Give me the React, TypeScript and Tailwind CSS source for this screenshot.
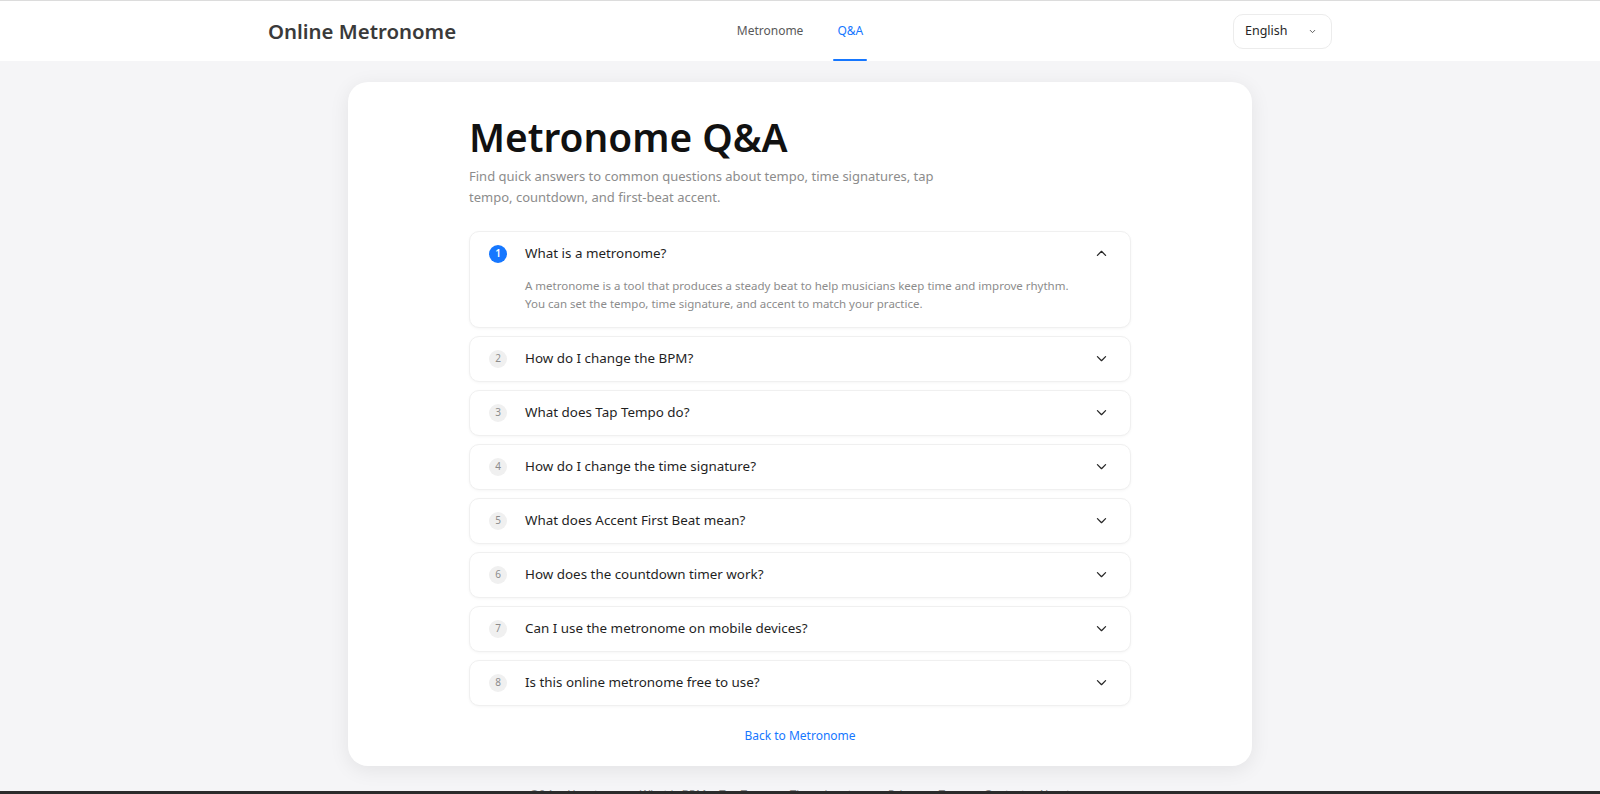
import { useState } from "react";

const faqs = [
  {
    q: "What is a metronome?",
    a: "A metronome is a tool that produces a steady beat to help musicians keep time and improve rhythm. You can set the tempo, time signature, and accent to match your practice.",
  },
  { q: "How do I change the BPM?", a: "" },
  { q: "What does Tap Tempo do?", a: "" },
  { q: "How do I change the time signature?", a: "" },
  { q: "What does Accent First Beat mean?", a: "" },
  { q: "How does the countdown timer work?", a: "" },
  { q: "Can I use the metronome on mobile devices?", a: "" },
  { q: "Is this online metronome free to use?", a: "" },
];

const footerLinks = ["Q&A", "How to use", "What is BPM", "Tap Tempo", "Time signatures", "Privacy", "Terms", "Contact", "About"];

function Chevron({ up }: { up?: boolean }) {
  return (
    <svg width="15" height="15" viewBox="0 0 24 24" fill="none" stroke="#262626" strokeWidth="2" strokeLinecap="round" strokeLinejoin="round">
      {up ? <path d="M5.5 15l6.5-6.5 6.5 6.5" /> : <path d="M5.5 9l6.5 6.5 6.5-6.5" />}
    </svg>
  );
}

export default function App() {
  const [open, setOpen] = useState(0);

  return (
    <div className="h-[794px] overflow-hidden bg-[#f5f5f7] border-t border-[#dcdcdc] font-['Noto_Sans',sans-serif]">
      {/* header */}
      <header className="bg-white h-[60px]">
        <div className="max-w-[1064px] mx-auto h-full grid grid-cols-3 items-center">
          <div className="text-[20.4px] font-semibold text-[#3a3a3a]">Online Metronome</div>
          <nav className="justify-self-center flex items-center gap-[30px] h-full text-[12px] pl-[4px]">
            <a className="text-[#595959] h-full flex items-center">Metronome</a>
            <a className="text-[#1677ff] h-full flex items-center relative px-[4px]">
              Q&amp;A
              <span className="absolute left-0 right-0 bottom-0 h-[2px] bg-[#1677ff] rounded" />
            </a>
          </nav>
          <div className="justify-self-end">
            <button className="w-[99px] h-[35px] rounded-[10px] border border-[#ececec] bg-white flex items-center justify-between pl-[11px] pr-[14px] text-[12.5px] text-[#262626]">
              English
              <svg width="9" height="9" viewBox="0 0 24 24" fill="none" stroke="#555" strokeWidth="2.5" strokeLinecap="round" strokeLinejoin="round">
                <path d="M6 9l6 6 6-6" />
              </svg>
            </button>
          </div>
        </div>
      </header>

      <main className="pt-[21px]">
        <div className="w-[904px] mx-auto bg-white rounded-[20px] shadow-[0_4px_20px_rgba(0,0,0,0.08)] pt-[32px] pb-[20px]">
          <div className="w-[662px] mx-auto">
            <h1 className="text-[38.8px] font-semibold text-[#111] leading-[1.2]">Metronome Q&amp;A</h1>
            <p className="mt-[5px] text-[13px] leading-[21px] text-[#8c8c8c] max-w-[480px]">
              Find quick answers to common questions about tempo, time signatures, tap tempo, countdown, and first-beat accent.
            </p>

            <div className="mt-[23px] flex flex-col gap-[8px]">
              {faqs.map((f, i) => {
                const isOpen = open === i;
                return (
                  <div key={i} className="border border-[#f0f0f0] rounded-[10px] bg-white shadow-[0_1px_3px_rgba(0,0,0,0.04)]">
                    <button
                      onClick={() => setOpen(isOpen ? -1 : i)}
                      className="w-full h-[44px] flex items-center pl-[19px] pr-[21px] text-left"
                    >
                      <span
                        className={
                          isOpen
                            ? "w-[18px] h-[18px] rounded-full bg-[#1677ff] text-white text-[10px] font-semibold flex items-center justify-center"
                            : "w-[18px] h-[18px] rounded-full bg-[#f0f0f0] text-[#8c8c8c] text-[10px] flex items-center justify-center"
                        }
                      >
                        {i + 1}
                      </span>
                      <span className="ml-[18px] flex-1 text-[13.4px] text-[#1f1f1f]">{f.q}</span>
                      <Chevron up={isOpen} />
                    </button>
                    {isOpen && (
                      <div className="pl-[55px] pr-[48px] pb-[14px] mt-[1px] text-[11.5px] leading-[18px] text-[#8c8c8c]">
                        {f.a}
                      </div>
                    )}
                  </div>
                );
              })}
            </div>

            <div className="mt-[16px] text-center">
              <a className="text-[12px] text-[#1677ff]">Back to Metronome</a>
            </div>
          </div>
        </div>

        <footer className="mt-[20px] flex justify-center gap-[13px] text-[11.3px] text-[#8c8c8c]">
          {footerLinks.map((l) => (
            <a key={l}>{l}</a>
          ))}
        </footer>
      </main>

      <div className="fixed left-0 right-0 bottom-0 h-[3px] bg-[#2b2b2b]" />
    </div>
  );
}
